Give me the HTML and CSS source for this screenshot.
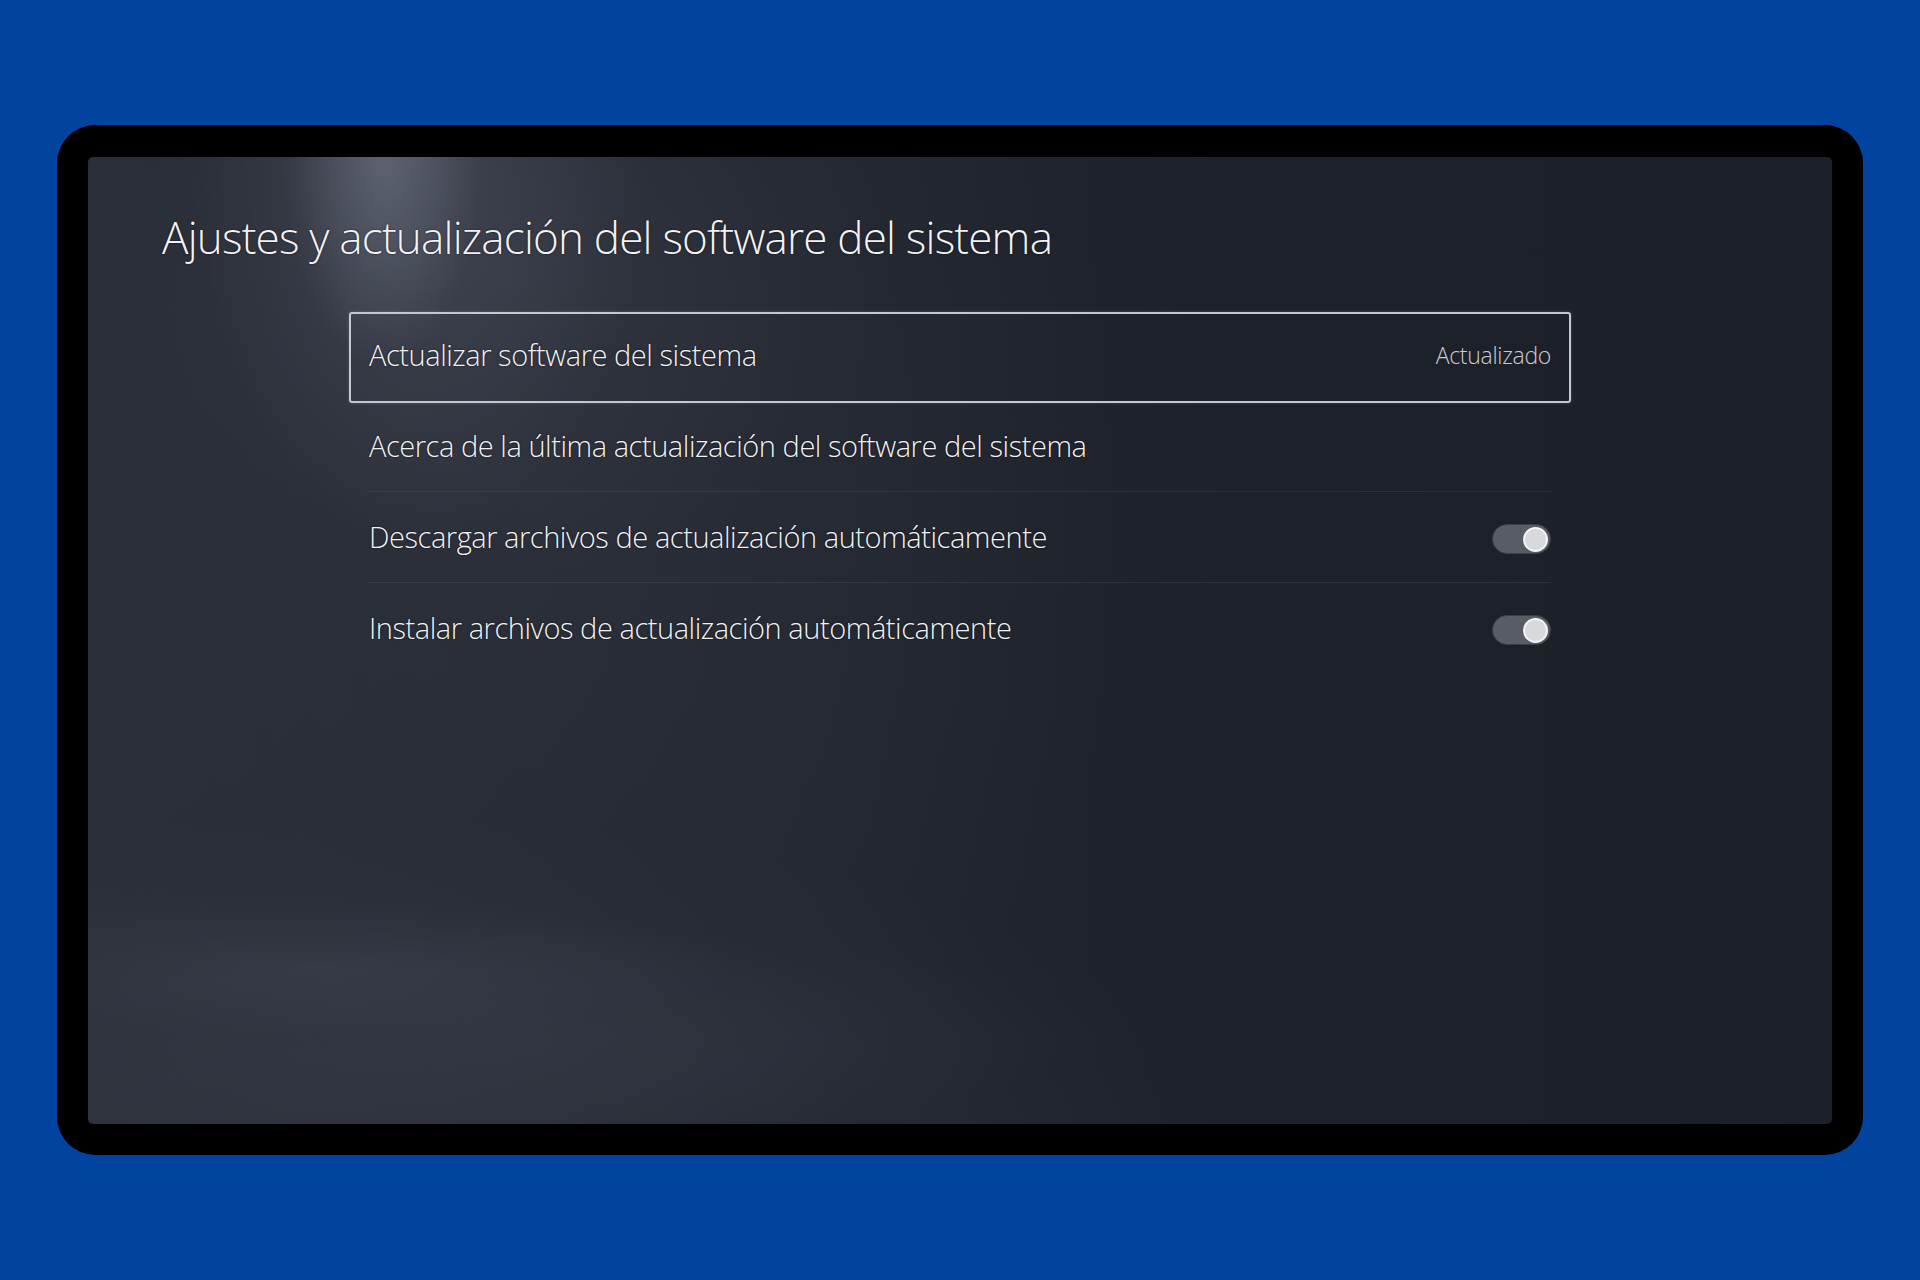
FILE: index.html
```html
<!DOCTYPE html>
<html lang="es">
<head>
    <meta charset="UTF-8">
    <meta name="viewport" content="width=device-width, initial-scale=1.0">
    <title>Ajustes del sistema</title>
    <link rel="stylesheet" href="styles.css">
</head>
<body>
    <div class="tv">
        <div class="screen">
            <h1 class="page-title">Ajustes y actualización del software del sistema</h1>

            <!-- Lista de opciones -->
            <div class="menu">
                <div class="menu-row focused">
                    <div class="menu-inner">
                        <span class="label">Actualizar software del sistema</span>
                        <span class="status">Actualizado</span>
                    </div>
                </div>
                <div class="menu-row">
                    <div class="menu-inner">
                        <span class="label">Acerca de la última actualización del software del sistema</span>
                    </div>
                </div>
                <div class="menu-row">
                    <div class="menu-inner">
                        <span class="label">Descargar archivos de actualización automáticamente</span>
                        <div class="toggle on"><div class="knob"></div></div>
                    </div>
                </div>
                <div class="menu-row">
                    <div class="menu-inner">
                        <span class="label">Instalar archivos de actualización automáticamente</span>
                        <div class="toggle on"><div class="knob"></div></div>
                    </div>
                </div>
            </div>
        </div>
    </div>
</body>
</html>
```

FILE: styles.css
```css
html, body {
    margin: 0;
    height: 100%;
}

body {
    background: #0144a0;
    display: flex;
    align-items: center;
    justify-content: center;
    font-family: 'Open Sans', 'Noto Sans', sans-serif;
    font-weight: 300;
    color: #f2f2f4;
}

.tv {
    width: 1806px;
    height: 1030px;
    box-sizing: border-box;
    padding: 32px 31px 31px 31px;
    background: #000;
    border-radius: 38px;
}

/* fondo: foco de luz arriba, bruma abajo a la izquierda */
.screen {
    height: 100%;
    box-sizing: border-box;
    border-radius: 5px;
    padding: 55px 74px 0 74px;
    overflow: hidden;
    background:
        radial-gradient(ellipse 100px 220px at 295px -10px, rgba(150,155,178,0.38), rgba(150,155,178,0) 100%),
        radial-gradient(ellipse 230px 420px at 330px -30px, rgba(115,120,140,0.26), rgba(115,120,140,0) 100%),
        radial-gradient(ellipse 380px 300px at 420px 120px, rgba(90,95,112,0.16), rgba(90,95,112,0) 100%),
        radial-gradient(ellipse 420px 70px at 230px 810px, rgba(90,94,110,0.18), rgba(90,94,110,0) 100%),
        radial-gradient(ellipse 560px 110px at 420px 880px, rgba(75,78,95,0.22), rgba(75,78,95,0) 100%),
        radial-gradient(ellipse 900px 330px at 250px 990px, rgba(62,65,80,0.38), rgba(62,65,80,0) 100%),
        radial-gradient(ellipse 600px 700px at 450px 350px, rgba(55,60,72,0.30), rgba(55,60,72,0) 100%),
        linear-gradient(90deg, #2a2e37 0%, #262a33 22%, #21262f 45%, #1d222a 65%, #1b2029 100%);
}

.page-title {
    margin: 0;
    font-size: 44px;
    line-height: 50px;
    font-weight: 300;
    letter-spacing: -0.8px;
    text-shadow: 0 0 2px rgba(0,0,0,0.7);
}

.menu {
    width: 1222px;
    margin: 50px auto 0 auto;
}

.menu-row {
    height: 91px;
    box-sizing: border-box;
    padding: 0 18px;
    border: 2px solid transparent;
    border-radius: 3px;
}

.menu-row.focused {
    border-color: #c4c6d0;
    box-shadow: 0 0 3px rgba(255,255,255,0.2);
}

.menu-inner {
    height: 100%;
    box-sizing: border-box;
    display: flex;
    align-items: center;
    justify-content: space-between;
    padding-bottom: 5px;
    border-bottom: 1px solid rgba(255,255,255,0.07);
}

.menu-row.focused .menu-inner,
.menu-row:last-child .menu-inner {
    border-bottom-color: transparent;
}

.label {
    font-size: 29px;
    letter-spacing: -0.45px;
    text-shadow: 0 0 2px rgba(0,0,0,0.7);
}

.status {
    font-size: 23px;
    letter-spacing: -0.3px;
    color: #c9cad2;
}

.toggle {
    width: 59px;
    height: 30px;
    box-sizing: border-box;
    border-radius: 15px;
    background: #585c65;
    border: 1px solid #3c3f46;
    display: flex;
    align-items: center;
    padding: 0 2px;
    margin-top: 5px;
}

.toggle.on {
    justify-content: flex-end;
}

.knob {
    width: 25px;
    height: 25px;
    box-sizing: border-box;
    border-radius: 50%;
    background: #d8d9dc;
    border: 2px solid #f4f4f6;
}
```
